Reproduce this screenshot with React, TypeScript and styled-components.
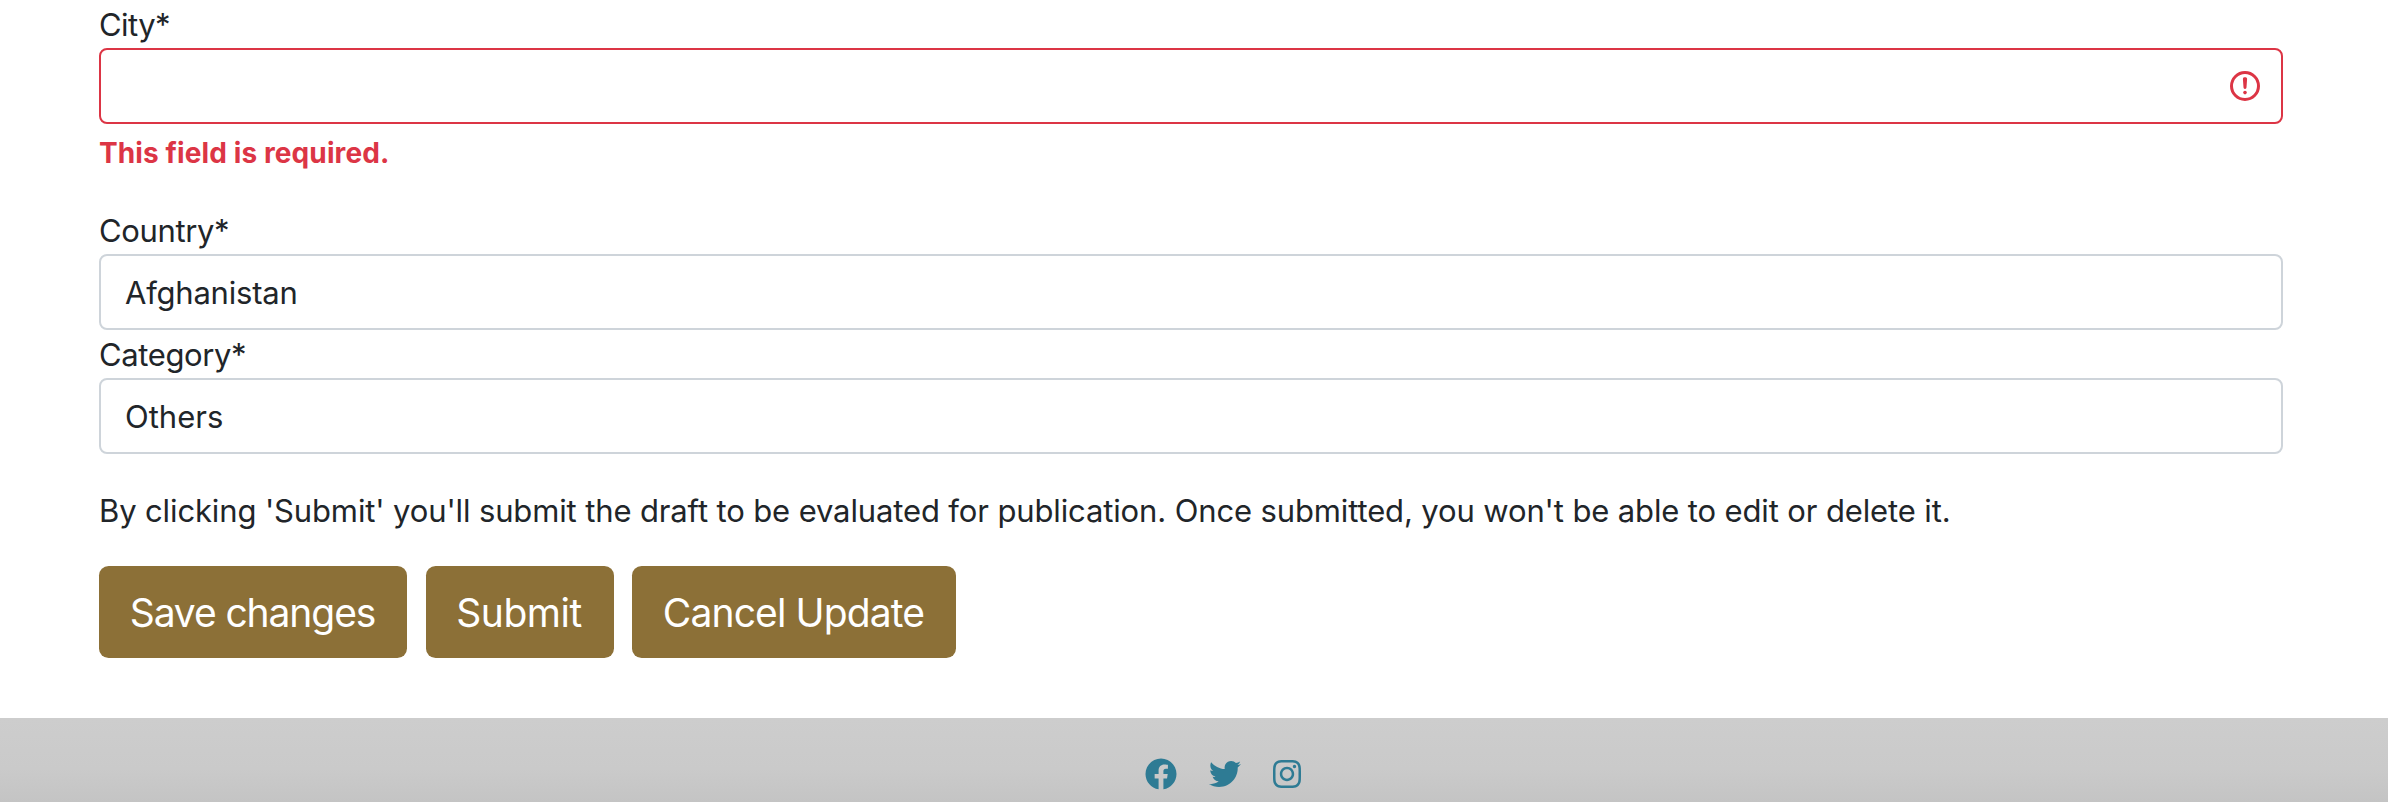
import React from "react";
import styled, { createGlobalStyle } from "styled-components";
import { FaFacebook, FaInstagram, FaTwitter } from "react-icons/fa";

const GlobalStyle = createGlobalStyle`
  *, *::before, *::after { box-sizing: border-box; }
  body {
    margin: 0;
    background: #fff;
    color: #212529;
    font-family: Inter, "Liberation Sans", sans-serif;
    font-size: 31px;
    line-height: 48px;
  }
`;

const Page = styled.div`
  display: flex;
  flex-direction: column;
  height: 802px;
  overflow: hidden;
`;

const Form = styled.form`
  display: flex;
  flex-direction: column;
  width: 2184px;
  height: 718px;
  flex: none;
  margin-left: 99px;
`;

const Field = styled.div<{ $gap?: number }>`
  display: flex;
  flex-direction: column;
  margin-bottom: ${(p) => p.$gap ?? 0}px;
`;

const Label = styled.label<{ $track: number }>`
  height: 48px;
  padding-top: 1px;
  letter-spacing: ${(p) => p.$track}px;
`;

const Control = styled.div<{ $invalid?: boolean; $track?: number }>`
  display: flex;
  align-items: center;
  justify-content: ${(p) => (p.$invalid ? "flex-end" : "flex-start")};
  height: 76px;
  padding: ${(p) => (p.$invalid ? "0 18px" : "2px 24px 0")};
  border: 2px solid ${(p) => (p.$invalid ? "#dc3545" : "#ced4da")};
  border-radius: 8px;
  letter-spacing: ${(p) => p.$track ?? 0}px;
`;

const ErrorText = styled.strong`
  margin-top: 8px;
  font-size: 28px;
  line-height: 42px;
  letter-spacing: 0.11px;
  font-weight: 700;
  color: #dc3545;
`;

const Notice = styled.p`
  margin: 0 0 31px;
  padding-top: 1px;
  letter-spacing: -0.129px;
  white-space: nowrap;
`;

const Actions = styled.div`
  display: flex;
  gap: 18.5px;
`;

const Button = styled.button<{ $width: number; $track: number }>`
  width: ${(p) => p.$width}px;
  height: 92px;
  padding: 2px 1px 0 0;
  border: 0;
  border-radius: 9.6px;
  background: #8c7037;
  color: #fff;
  font: 400 39px/60px Inter, "Liberation Sans", sans-serif;
  letter-spacing: ${(p) => p.$track}px;
  white-space: nowrap;
`;

const Footer = styled.footer`
  display: flex;
  justify-content: center;
  align-items: flex-start;
  gap: 32px;
  height: 84px;
  padding: 40px 0 0 58px;
  background: linear-gradient(#cdcdcd 0%, #cacaca 60%, #c4c4c4 100%);
  color: #2e7b94;
  font-size: 32px;
`;

const SocialLink = styled.a<{ $width: number }>`
  display: flex;
  justify-content: center;
  width: ${(p) => p.$width}px;
  height: 32px;
  color: inherit;
`;

const InvalidIcon = () => (
  <svg width="36" height="36" viewBox="0 0 12 12" fill="none" stroke="#dc3545">
    <circle cx="6" cy="6" r="4.5" />
    <path strokeLinejoin="round" d="M5.8 3.6h.4L6 6.5z" />
    <circle cx="6" cy="8.2" r=".6" fill="#dc3545" stroke="none" />
  </svg>
);

export default function App() {
  return (
    <>
      <GlobalStyle />
      <Page>
        <Form>
          <Field $gap={32}>
            <Label $track={-0.58}>City*</Label>
            <Control $invalid>
              <InvalidIcon />
            </Control>
            <ErrorText>This field is required.</ErrorText>
          </Field>
          <Field>
            <Label $track={-0.37}>Country*</Label>
            <Control $track={-0.22}>Afghanistan</Control>
          </Field>
          <Field $gap={32}>
            <Label $track={-0.39}>Category*</Label>
            <Control>Others</Control>
          </Field>
          <Notice>
            By clicking 'Submit' you'll submit the draft to be evaluated for publication. Once submitted, you won't be able to edit or delete it.
          </Notice>
          <Actions>
            <Button type="button" $width={308} $track={-1.1}>Save changes</Button>
            <Button type="button" $width={188} $track={-0.51}>Submit</Button>
            <Button type="button" $width={324} $track={-0.87}>Cancel Update</Button>
          </Actions>
        </Form>
        <Footer>
          <SocialLink $width={32} aria-label="Facebook"><FaFacebook /></SocialLink>
          <SocialLink $width={32} aria-label="Twitter"><FaTwitter /></SocialLink>
          <SocialLink $width={28} aria-label="Instagram"><FaInstagram /></SocialLink>
        </Footer>
      </Page>
    </>
  );
}
